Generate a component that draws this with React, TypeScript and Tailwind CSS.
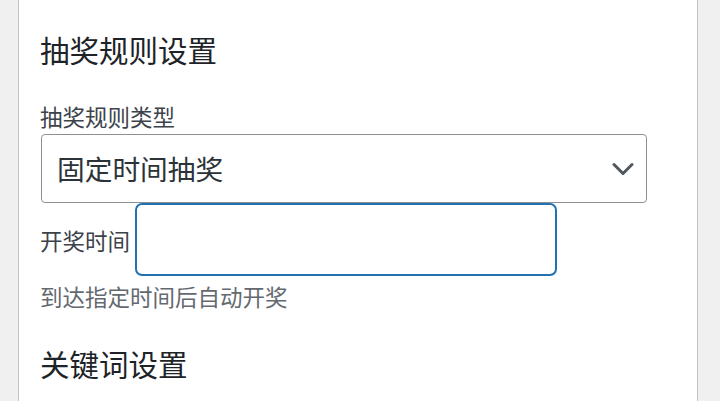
import React from 'react';

const cjk = { fontFamily: '"Noto Sans CJK SC", "Noto Sans", sans-serif' };

const Chevron = () => (
  <svg width="22" height="14" viewBox="0 0 22 14" fill="none" className="shrink-0">
    <path d="M2 2.5l9 9 9-9" stroke="#50575e" strokeWidth="3" strokeLinecap="round" strokeLinejoin="round" />
  </svg>
);

export default function App() {
  return (
    <div className="w-[720px] h-[401px] overflow-hidden bg-[#f0f0f0] flex pl-[18px] pr-[22px]" style={cjk}>
      <div className="flex-1 bg-white border-x border-[#c3c4c7] pl-[21px] pt-[29px]">
        {/* 抽奖规则 */}
        <h2 className="text-[29.5px] leading-[40px] text-[#1d2327]">抽奖规则设置</h2>

        <label className="block mt-[32px] text-[22.5px] leading-[30px] text-[#3c434a]">抽奖规则类型</label>
        <div className="mt-[3px] ml-[1px] w-[606px] h-[69px] border border-[#8c8f94] rounded-[4px] flex items-center justify-between pl-[15px] pr-[12px]">
          <span className="text-[27.7px] text-[#2c3338]">固定时间抽奖</span>
          <Chevron />
        </div>

        <div className="flex items-center gap-[5px]">
          <span className="text-[22.5px] leading-[30px] text-[#3c434a]">开奖时间</span>
          <div className="w-[422px] h-[73px] border-2 border-[#2271b1] rounded-[7px]" />
        </div>

        <p className="mt-[5px] text-[22.5px] leading-[30px] text-[#646970]">到达指定时间后自动开奖</p>

        {/* 关键词 */}
        <h2 className="mt-[32px] text-[29.5px] leading-[40px] text-[#1d2327]">关键词设置</h2>
      </div>
    </div>
  );
}
